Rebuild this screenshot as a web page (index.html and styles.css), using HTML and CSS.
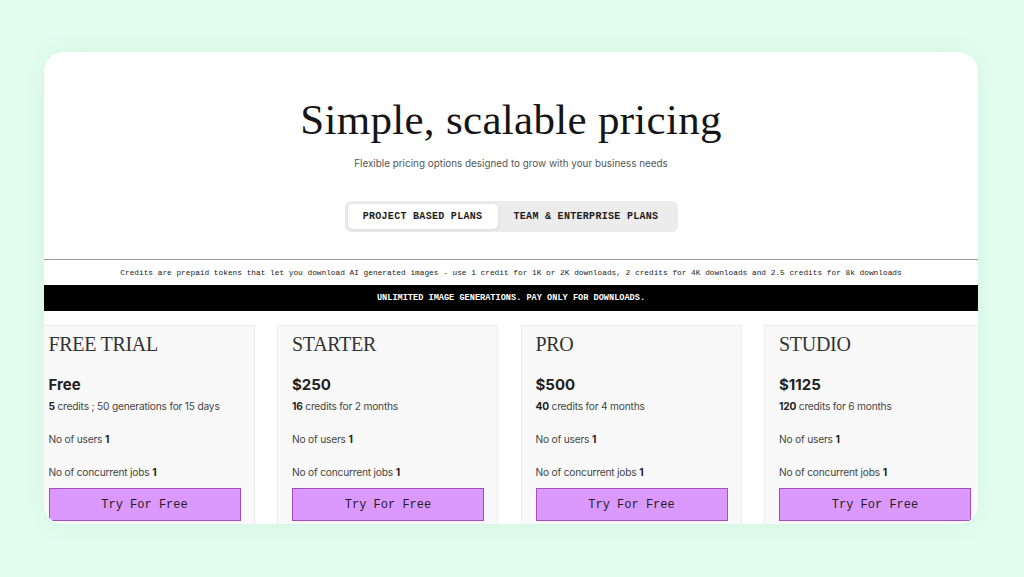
FILE: index.html
```html
<!DOCTYPE html>
<html>
<head>
<meta charset="utf-8">
<link rel="stylesheet" href="styles.css">
</head>
<body>
<div class="page">
  <div class="panel">
    <header class="hero">
      <h1 class="title">Simple, scalable pricing</h1>
      <p class="subtitle">Flexible pricing options designed to grow with your business needs</p>
      <div class="tabs">
        <span class="tab tab-active">PROJECT BASED PLANS</span>
        <span class="tab">TEAM &amp; ENTERPRISE PLANS</span>
      </div>
    </header>
    <div class="note">Credits are prepaid tokens that let you download AI generated images - use 1 credit for 1K or 2K downloads, 2 credits for 4K downloads and 2.5 credits for 8k downloads</div>
    <div class="banner">UNLIMITED IMAGE GENERATIONS. PAY ONLY FOR DOWNLOADS.</div>
    <div class="plans">
      <div class="plan">
        <h2 class="plan-name">FREE TRIAL</h2>
        <div class="price">Free</div>
        <div class="line"><b>5</b> credits ; 50 generations for 15 days</div>
        <div class="line gap">No of users <b>1</b></div>
        <div class="line gap">No of concurrent jobs <b>1</b></div>
        <button class="cta">Try For Free</button>
      </div>
      <div class="plan">
        <h2 class="plan-name">STARTER</h2>
        <div class="price">$250</div>
        <div class="line"><b>16</b> credits for 2 months</div>
        <div class="line gap">No of users <b>1</b></div>
        <div class="line gap">No of concurrent jobs <b>1</b></div>
        <button class="cta">Try For Free</button>
      </div>
      <div class="plan">
        <h2 class="plan-name">PRO</h2>
        <div class="price">$500</div>
        <div class="line"><b>40</b> credits for 4 months</div>
        <div class="line gap">No of users <b>1</b></div>
        <div class="line gap">No of concurrent jobs <b>1</b></div>
        <button class="cta">Try For Free</button>
      </div>
      <div class="plan">
        <h2 class="plan-name">STUDIO</h2>
        <div class="price">$1125</div>
        <div class="line"><b>120</b> credits for 6 months</div>
        <div class="line gap">No of users <b>1</b></div>
        <div class="line gap">No of concurrent jobs <b>1</b></div>
        <button class="cta">Try For Free</button>
      </div>
    </div>
  </div>
</div>
</body>
</html>
```

FILE: styles.css
```css
html, body {
  margin: 0;
  padding: 0;
  background: #e3fdef;
}
.page {
  width: 1024px;
  height: 577px;
  padding: 52px 0 0 44px;
  box-sizing: border-box;
}
.panel {
  width: 934px;
  height: 472px;
  background: #ffffff;
  border-radius: 20px;
  overflow: hidden;
  box-shadow: 0 0 24px rgba(160, 220, 190, 0.25);
}
.hero {
  display: flex;
  flex-direction: column;
  align-items: center;
  padding-top: 43px;
}
.title {
  margin: 0;
  font-family: "Liberation Serif", serif;
  font-weight: 400;
  font-size: 43px;
  line-height: 50px;
  color: #151515;
  letter-spacing: 0.3px;
}
.subtitle {
  margin: 11px 0 0;
  font-family: Inter, "Noto Sans", sans-serif;
  font-size: 9.9px;
  line-height: 14px;
  color: #555;
}
.tabs {
  margin-top: 31px;
  display: flex;
  background: #ececec;
  border-radius: 6px;
  padding: 3px;
  width: 333px;
  height: 31px;
  box-sizing: border-box;
}
.tab {
  display: flex;
  align-items: center;
  justify-content: center;
  font-family: "Liberation Mono", monospace;
  font-weight: 700;
  font-size: 10px;
  letter-spacing: 0.3px;
  color: #1d1d1d;
  height: 25px;
  padding: 0 16px;
}
.tab-active {
  background: #fff;
  border-radius: 5px;
  box-shadow: 0 1px 4px rgba(0, 0, 0, 0.08);
  width: 150px;
  padding: 0;
}
.note {
  margin-top: 27px;
  border-top: 1px solid #9a9a9a;
  height: 25px;
  display: flex;
  align-items: center;
  justify-content: center;
  font-family: "Liberation Mono", monospace;
  font-size: 7.8px;
  color: #222;
}
.banner {
  height: 26px;
  background: #000;
  color: #fff;
  display: flex;
  align-items: center;
  justify-content: center;
  font-family: "Liberation Mono", monospace;
  font-weight: 700;
  font-size: 8.6px;
}
.plans {
  display: flex;
  gap: 22.5px;
  margin: 14px 0 0 -10.5px;
}
.plan {
  flex: 0 0 221px;
  width: 221px;
  height: 240px;
  background: #f9f9f9;
  border: 1px solid #ececec;
  box-sizing: border-box;
  padding: 0 14px;
  font-family: Inter, "Noto Sans", sans-serif;
  color: #444;
  min-width: 0;
}
.plan-name {
  margin: 6px 0 0;
  font-family: "Liberation Serif", serif;
  font-weight: 400;
  font-size: 20px;
  line-height: 24px;
  color: #333;
  letter-spacing: -0.3px;
}
.price {
  margin-top: 20px;
  font-family: Inter, "Noto Sans", sans-serif;
  font-weight: 700;
  font-size: 15px;
  line-height: 18px;
  color: #222;
}
.line {
  font-size: 10.2px;
  line-height: 14px;
  margin-top: 5px;
  letter-spacing: -0.2px;
}
.line b {
  color: #222;
  font-weight: 700;
}
.line.gap {
  margin-top: 19px;
}
.cta {
  display: block;
  margin-top: 9px;
  width: 192px;
  height: 33px;
  background: #dc99fd;
  border: 1px solid #a84cc6;
  font-family: "Liberation Mono", monospace;
  font-size: 12px;
  color: #241c28;
  padding: 0;
}
```
